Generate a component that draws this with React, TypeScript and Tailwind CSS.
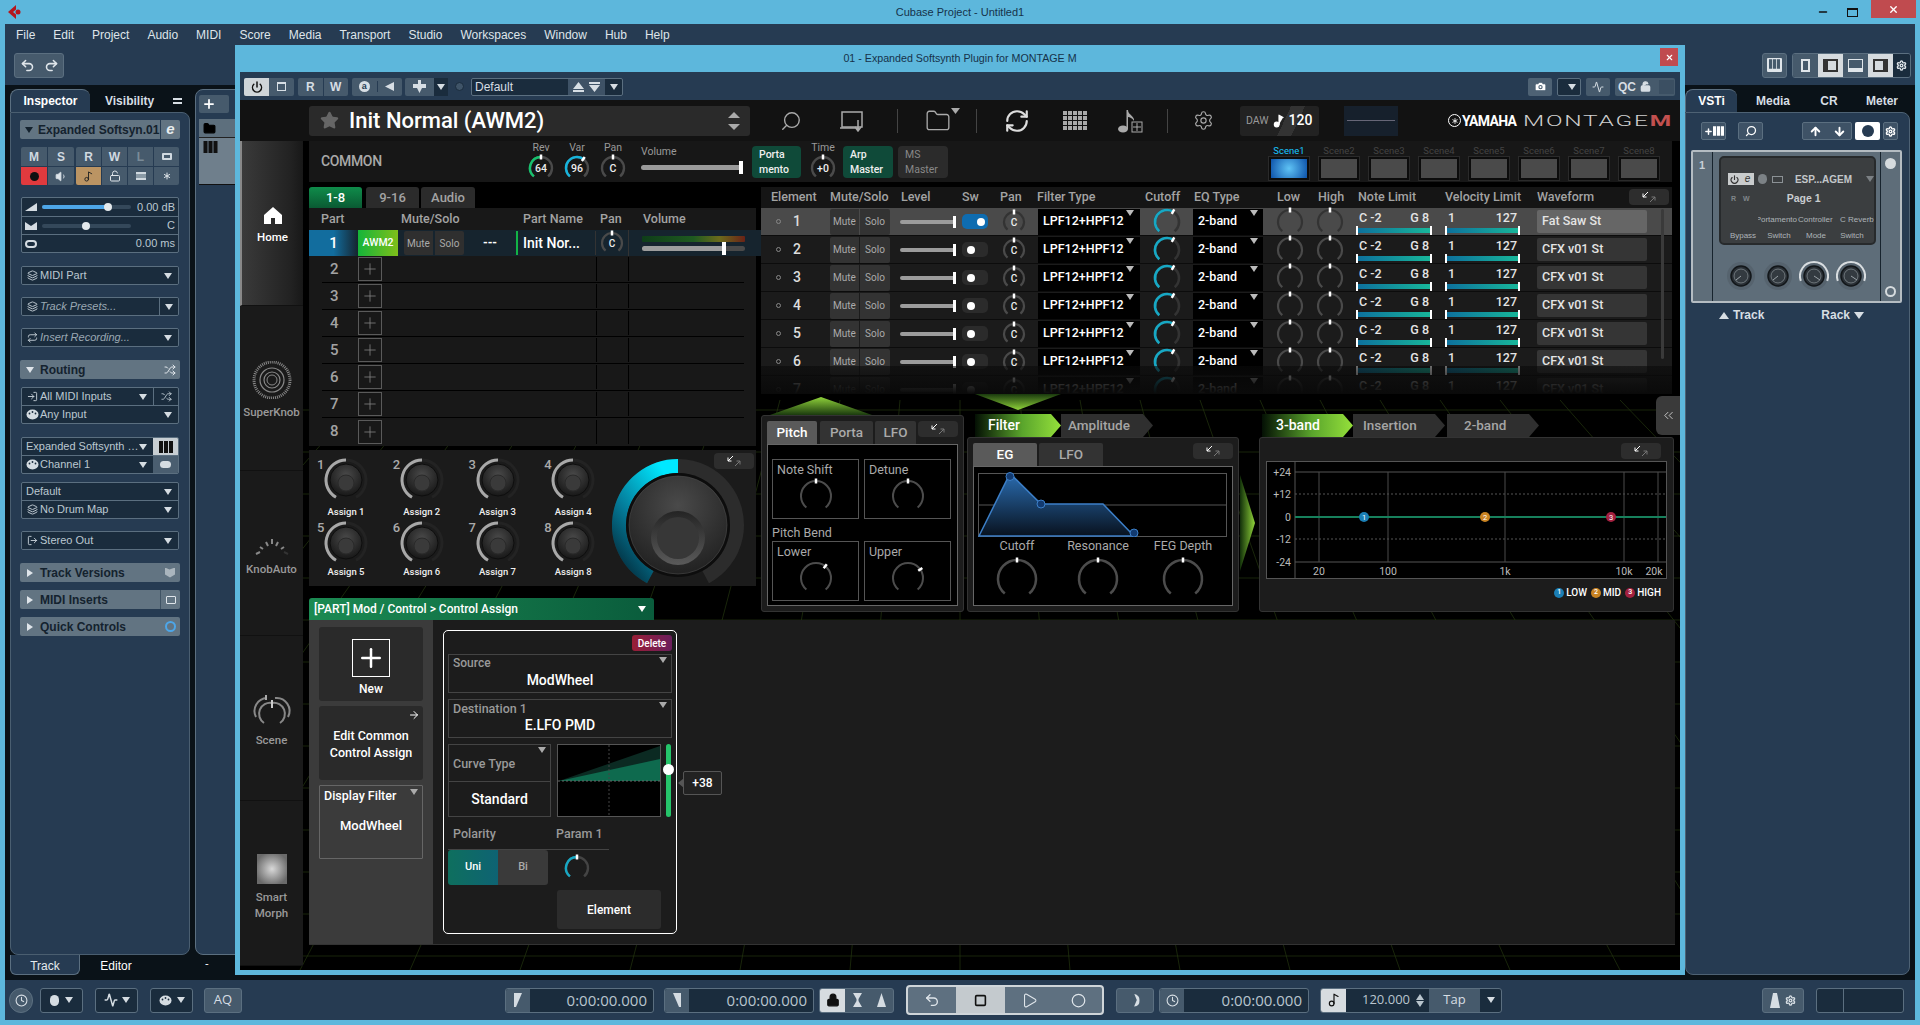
import React from "react";
import {
  Undo2, Redo2, Plus, Search, Settings, RefreshCw, Star, Lock, LockOpen, Square, Play, Circle, Power, ChevronsLeft, ArrowRight, ArrowUp, ArrowDown, Clock, Shuffle, LogIn, LogOut, Activity, Camera, Folder, Music2, Layers, Repeat, X, Minus, Asterisk, Volume1,
} from "lucide-react";

const pol = (c: number, r: number, d: number) => {
  const a = ((d - 90) * Math.PI) / 180;
  return [c + r * Math.cos(a), c + r * Math.sin(a)];
};
const arc = (c: number, r: number, a0: number, a1: number) => {
  const [x0, y0] = pol(c, r, a0);
  const [x1, y1] = pol(c, r, a1);
  return `M${x0} ${y0}A${r} ${r} 0 ${a1 - a0 > 180 ? 1 : 0} 1 ${x1} ${y1}`;
};

function Knob({ s = 26, r = 10, w = 2.5, val = 0, color, label, fs = 10, track = "#4a4a4a", tick = true }: { s?: number; r?: number; w?: number; val?: number; color?: string; label?: string; fs?: number; track?: string; tick?: boolean }) {
  const c = s / 2;
  const [x0, y0] = pol(c, r - 2.5, val);
  const [x1, y1] = pol(c, r + 2.5, val);
  return (
    <svg width={s} height={s} className="shrink-0">
      <path d={arc(c, r, -140, 140)} fill="none" stroke={track} strokeWidth={w} />
      {color && <path d={arc(c, r, -140, val)} fill="none" stroke={color} strokeWidth={w} />}
      {tick && <line x1={x0} y1={y0} x2={x1} y2={y1} stroke="#fff" strokeWidth={2.5} />}
      {label && <text x={c} y={c + fs * 0.4} textAnchor="middle" fontSize={fs} fontWeight={500} fill="#eee" fontFamily="Roboto">{label}</text>}
    </svg>
  );
}

function Expand() {
  return (
    <div className="w-10 h-4 bg-[#2d2d2d] rounded flex items-center justify-center">
      <svg width="16" height="14" viewBox="0 0 16 14" fill="none">
        <path d="M7 2L2 7M2 3.5V7H5.5" stroke="#fff" strokeWidth="1" />
        <path d="M9 12L14 7M14 10.5V7H10.5" stroke="#777" strokeWidth="1" />
      </svg>
    </div>
  );
}

const Caret = ({ c = "#d5dce2" }: { c?: string }) => (
  <svg width="8" height="6" className="shrink-0"><path d="M0 0H8L4 6Z" fill={c} /></svg>
);

function Field({ icon, children, italic, box, right }: { icon?: React.ReactNode; children: React.ReactNode; italic?: boolean; box?: boolean; right?: React.ReactNode }) {
  return (
    <div className="h-[17px] flex items-center text-[11px] text-[#bcc8d1] bg-[#1a2c3d] pl-[3px]">
      {icon && <span className="w-[14px] flex justify-center shrink-0 text-[#c8d2da]">{icon}</span>}
      <span className={`flex-1 truncate pl-[1px] ${italic ? "italic text-[#9aa8b3]" : ""}`}>{children}</span>
      {!box && <span className="mr-[6px]"><Caret /></span>}
      {right}
    </div>
  );
}

const Box = ({ children, className = "" }: { children: React.ReactNode; className?: string }) => (
  <div className={`mx-[10px] border border-[#5b6f80] rounded-[2px] flex flex-col gap-px bg-[#5b6f80] overflow-hidden ${className}`}>{children}</div>
);

function Section({ label, open, right, mt }: { label: string; open?: boolean; right?: React.ReactNode; mt: string }) {
  return (
    <div className={`mx-[9px] h-[19px] bg-[#627482] rounded-[2px] flex items-center text-[12px] font-bold text-[#1c2b38] ${mt}`}>
      <span className="w-[19px] flex justify-center">
        <svg width="8" height="8"><path d={open ? "M0 1H8L4 7Z" : "M1 0V8L7 4Z"} fill="#dfe5ea" /></svg>
      </span>
      <span className="flex-1 pl-[1px] text-[#14222e]">{label}</span>
      {right}
    </div>
  );
}

const MidiPort = () => (
  <svg width="13" height="11" viewBox="0 0 13 11"><ellipse cx="6.5" cy="5.5" rx="6" ry="5" fill="#d5dce2" /><circle cx="3.5" cy="4.5" r=".9" fill="#1a2c3d" /><circle cx="6.5" cy="3" r=".9" fill="#1a2c3d" /><circle cx="9.5" cy="4.5" r=".9" fill="#1a2c3d" /></svg>
);
const Keys = ({ c = "#111", w = 14 }: { c?: string; w?: number }) => (
  <svg width={w} height="12" viewBox="0 0 14 12"><path d="M0 0H4V12H0ZM5 0H9V12H5ZM10 0H14V12H10Z" fill={c} /></svg>
);

function Inspector() {
  return (
    <div className="w-[180px] ml-[5px] flex flex-col font-['Liberation_Sans',sans-serif]">
      <div className="h-[23px] flex text-[12px] font-bold shrink-0">
        <div className="w-[80px] bg-[#263b52] rounded-t-[8px] border-t border-l border-[#5b6f80] flex items-center justify-center text-white">Inspector</div>
        <div className="flex-1 flex items-center text-[#d7dee4] pl-[15px]">Visibility<span className="ml-auto mr-[8px] w-[9px] h-[6px] border-y-2 border-[#d7dee4]" /></div>
      </div>
      <div className="flex-1 bg-[#263b52] rounded-tr-[8px] rounded-bl-[8px] rounded-br-[8px] border border-[#4a5e70] pt-[7px] min-h-0">
        <div className="mx-[9px] flex gap-px h-[19px]">
          <div className="w-[140px] bg-[#627482] flex items-center rounded-l-[2px] text-[12px] font-bold text-[#14222e] whitespace-nowrap">
            <span className="w-[18px] flex justify-center"><svg width="8" height="8"><path d="M0 1H8L4 7Z" fill="#14222e" /></svg></span>Expanded Softsyn.01
          </div>
          <div className="flex-1 bg-[#627482] rounded-r-[2px] flex items-center justify-center text-[#e8edf0] italic font-bold text-[15px] leading-none pb-[3px]">e</div>
        </div>
        <div className="mx-[10px] mt-[8px] flex justify-between">
          <div className="w-[53px] grid grid-cols-2 gap-px rounded-[2px] overflow-hidden text-[12px] font-bold text-[#d0d9e0]">
            <div className="h-[19px] bg-[#465a6c] flex items-center justify-center">M</div>
            <div className="h-[19px] bg-[#465a6c] flex items-center justify-center">S</div>
            <div className="h-[18px] bg-[#e03a3e] flex items-center justify-center"><span className="w-[9px] h-[9px] rounded-full bg-[#111]" /></div>
            <div className="h-[18px] bg-[#465a6c] flex items-center justify-center"><Volume1 size={13} fill="#dfe5ea" strokeWidth={1.5} /></div>
          </div>
          <div className="w-[103px] grid grid-cols-4 gap-px rounded-[2px] overflow-hidden text-[12px] font-bold text-[#d0d9e0]">
            <div className="h-[19px] bg-[#465a6c] flex items-center justify-center">R</div>
            <div className="h-[19px] bg-[#465a6c] flex items-center justify-center">W</div>
            <div className="h-[19px] bg-[#465a6c] flex items-center justify-center text-[#7a8b98]">L</div>
            <div className="h-[19px] bg-[#465a6c] flex items-center justify-center"><span className="w-[10px] h-[7px] border-2 border-[#d0d9e0] rounded-[1px]" /></div>
            <div className="h-[18px] bg-[#bb9463] flex items-center justify-center"><Music2 size={11} color="#222" /></div>
            <div className="h-[18px] bg-[#465a6c] flex items-center justify-center"><LockOpen size={12} color="#dfe5ea" /></div>
            <div className="h-[18px] bg-[#465a6c] flex items-center justify-center"><span className="w-[10px] h-[8px] border-y-2 border-[#d0d9e0] bg-[#8a9aa6]" /></div>
            <div className="h-[18px] bg-[#465a6c] flex items-center justify-center"><Asterisk size={12} color="#dfe5ea" /></div>
          </div>
        </div>
        <Box className="mt-[12px]">
          <div className="h-[18px] flex items-center bg-[#1a2c3d] text-[11px] text-[#bcc8d1]">
            <svg width="14" height="8" className="ml-[3px]"><path d="M0 8L12 0V8Z" fill="#d5dce2" /></svg>
            <div className="ml-[3px] w-[89px] h-[4px] bg-[#34485a] rounded relative"><div className="w-[65px] h-full bg-[#4da6e8] rounded" /><span className="absolute left-[62px] -top-[2px] w-[8px] h-[8px] rounded-full bg-[#e4e9ec]" /></div>
            <span className="ml-auto mr-[3px]">0.00 dB</span>
          </div>
          <div className="h-[17px] flex items-center bg-[#1a2c3d] text-[11px] text-[#bcc8d1]">
            <svg width="14" height="8" className="ml-[3px]"><path d="M0 0L6 4L12 0V8H0Z" fill="#d5dce2" /></svg>
            <div className="ml-[3px] w-[89px] h-[4px] bg-[#34485a] rounded relative"><span className="absolute left-[40px] -top-[2px] w-[8px] h-[8px] rounded-full bg-[#e4e9ec]" /></div>
            <span className="ml-auto mr-[3px]">C</span>
          </div>
          <div className="h-[17px] flex items-center bg-[#1a2c3d] text-[11px] text-[#bcc8d1]">
            <span className="ml-[3px] w-[12px] h-[8px] rounded-full border-2 border-[#d5dce2]" />
            <span className="ml-auto mr-[3px]">0.00 ms</span>
          </div>
        </Box>
        <Box className="mt-[13px]"><Field icon={<Layers size={11} />}>MIDI Part</Field></Box>
        <Box className="mt-[12px]">
          <Field italic box icon={<Layers size={11} />} right={<span className="w-[19px] h-[17px] border-l border-[#5b6f80] flex items-center justify-center"><Caret /></span>}>Track Presets...</Field>
        </Box>
        <Box className="mt-[12px]"><Field italic icon={<Repeat size={11} />}>Insert Recording...</Field></Box>
        <Section label="Routing" open mt="mt-[13px]" right={<Shuffle size={12} className="mr-[4px] text-[#dfe5ea]" />} />
        <Box className="mt-[8px]">
          <Field icon={<LogIn size={11} />} right={<span className="w-[25px] h-[17px] border-l border-[#5b6f80] flex items-center justify-center"><Shuffle size={11} /></span>}>All MIDI Inputs</Field>
          <Field icon={<MidiPort />}>Any Input</Field>
        </Box>
        <Box className="mt-[13px]">
          <Field right={<span className="w-[25px] h-[17px] bg-[#c7ced3] flex items-center justify-center"><Keys /></span>}>Expanded Softsynth Pl.</Field>
          <Field icon={<MidiPort />} right={<span className="w-[25px] h-[17px] bg-[#4a5e70] flex items-center justify-center"><span className="w-[11px] h-[7px] rounded-full bg-[#d5dce2]" /></span>}>Channel 1</Field>
        </Box>
        <Box className="mt-[8px]">
          <Field>Default</Field>
          <Field icon={<Layers size={11} />}>No Drum Map</Field>
        </Box>
        <Box className="mt-[12px]"><Field icon={<LogOut size={11} />}>Stereo Out</Field></Box>
        <Section label="Track Versions" mt="mt-[13px]" right={<span className="mr-[5px] w-[10px] h-[10px] bg-[#aab5bd] [clip-path:polygon(0_0,45%_20%,100%_0,100%_70%,50%_100%,0_70%)]" />} />
        <Section label="MIDI Inserts" mt="mt-[8px]" right={<span className="w-[20px] h-[19px] border-l border-[#3f5364] flex items-center justify-center"><span className="w-[10px] h-[8px] border border-[#dfe5ea] rounded-[1px]" /></span>} />
        <Section label="Quick Controls" mt="mt-[8px]" right={<span className="mr-[4px] w-[11px] h-[11px] rounded-full border-2 border-[#4da6e8]" />} />
      </div>
      <div className="h-[20px] flex text-[12px] shrink-0 mb-[5px]">
        <div className="w-[70px] bg-[#263b52] rounded-b-[6px] border-b border-x border-[#5b6f80] flex items-center justify-center text-[#e4eaee] pt-[2px]">Track</div>
        <div className="flex-1 flex items-center justify-center pr-[38px] text-white pt-[2px]">Editor</div>
      </div>
    </div>
  );
}

function TrackList() {
  return (
    <div className="w-[100px] ml-[5px] flex flex-col">
      <div className="flex-1 bg-[#263b52] border border-[#5b6f80] rounded-t-[8px] rounded-bl-[8px] pt-[5px] pl-[3px]">
        <div className="h-[18px] w-[30px] bg-[#465a6c] rounded-[2px] flex items-center pl-[3px]"><Plus size={14} strokeWidth={3} color="#fff" /></div>
        <div className="mt-[6px] h-[19px] bg-[#5d6f7d] border-b border-[#222] flex items-center pl-[4px]"><Folder size={13} fill="#000" color="#000" /></div>
        <div className="h-[47px] bg-[#6f7f8c] border-b border-[#111] pl-[4px] pt-[3px]"><Keys w={15} /></div>
      </div>
      <div className="h-[25px] flex items-start pl-[10px]"><span className="text-[11px] text-white">-</span></div>
    </div>
  );
}

function Rack() {
  return (
    <div className="w-[225px] ml-auto mr-[5px] flex flex-col font-['Liberation_Sans',sans-serif]">
      <div className="h-[23px] flex items-center text-[12px] font-bold text-[#d7dee4] shrink-0">
        <div className="w-[52px] h-full bg-[#263b52] rounded-t-[8px] border-t border-l border-[#5b6f80] flex items-center justify-center text-white">VSTi</div>
        <span className="w-[62px] text-center ml-[5px]">Media</span>
        <span className="w-[40px] text-center ml-[5px]">CR</span>
        <span className="ml-[17px]">Meter</span>
      </div>
      <div className="flex-1 bg-[#263b52] rounded-tr-[8px] rounded-b-[8px] border border-[#4e6274] pt-[9px] mb-[5px] relative">
        <div className="flex items-center h-[18px] pl-[15px]">
          <div className="w-[25px] h-[18px] bg-[#3e5266] border border-[#5b6f80] rounded-[2px] flex items-center justify-center text-white"><Plus size={9} strokeWidth={4} /><Keys c="#fff" w={11} /></div>
          <div className="w-[25px] h-[18px] ml-[12px] border border-[#5b6f80] bg-[#3e5266] rounded-[2px] flex items-center justify-center"><Search size={12} color="#fff" strokeWidth={2.5} className="-scale-x-100" /></div>
          <div className="w-[50px] h-[18px] ml-[39px] border border-[#5b6f80] bg-[#3e5266] rounded-[2px] flex items-center justify-around text-white"><ArrowUp size={13} strokeWidth={3.5} /><ArrowDown size={13} strokeWidth={3.5} /></div>
          <div className="w-[25px] h-[18px] ml-[3px] bg-white rounded-[2px] flex items-center justify-center"><span className="w-[12px] h-[12px] rounded-full bg-[#263b52]" /></div>
          <div className="w-[15px] h-[18px] ml-[3px] border border-[#5b6f80] bg-[#3e5266] rounded-[2px] flex items-center justify-center"><Settings size={11} color="#fff" strokeWidth={3} /></div>
        </div>
        <div className="mt-[10px] ml-[5px] w-[211px] h-[153px] bg-[#5e6d79] border-2 border-[#b4bcc2] flex rounded-[2px]">
          <div className="w-[20px] border-r border-[#17232d] text-[11px] font-bold text-[#c8d0d6] pl-[6px] pt-[5px]">1</div>
          <div className="flex-1 min-w-0">
            <div className="mt-[4px] ml-[6px] w-[157px] h-[89px] bg-[#3b3e40] border-2 border-[#272a2c] rounded-[5px] pt-[15px] text-[#aeb4b8] relative">
              <div className="flex items-center pl-[7px] h-[12px]">
                <span className="w-[14px] h-[12px] bg-[#c9cccd] flex items-center justify-center"><Power size={9} color="#333" strokeWidth={3} /></span>
                <span className="w-[13px] h-[12px] bg-[#c9cccd] text-[#333] text-[10px] italic leading-[11px] text-center">e</span>
                <span className="ml-[4px] w-[10px] h-[10px] rounded-full bg-[#7c8286]" />
                <span className="ml-[5px] w-[11px] h-[7px] border border-[#8b9195]" />
                <span className="ml-[12px] text-[10px] font-bold text-[#c3c7ca]">ESP...AGEM</span>
                <span className="ml-[14px]"><Caret c="#7b8084" /></span>
              </div>
              <div className="flex items-center pl-[10px] mt-[8px] h-[12px]">
                <span className="text-[7px] font-bold text-[#80868a]">R</span>
                <span className="text-[7px] font-bold text-[#80868a] ml-[7px]">W</span>
                <span className="text-[10.5px] font-bold text-[#c8cccf] ml-[37px]">Page 1</span>
              </div>
              <div className="flex pl-[37px] mt-[9px] text-[8px] whitespace-nowrap"><span className="w-[39px] overflow-hidden text-right [direction:rtl]">Portamento</span><span className="ml-[1px] w-[38px]">Controller</span><span className="ml-[4px]">C Reverb</span></div>
              <div className="flex mt-[4px] text-[8px] text-center"><span className="w-[30px] ml-[7px]">Bypass</span><span className="w-[30px] ml-[6px]">Switch</span><span className="w-[30px] ml-[7px]">Mode</span><span className="w-[30px] ml-[6px]">Switch</span></div>
            </div>
            <div className="mt-[16px] ml-[13px] flex">
              {[0, 1, 2, 3].map((i) => (
                <svg key={i} width="30" height="30" className="mr-[6.5px]">
                  <circle cx="15" cy="15" r="14" fill="#56636e" />
                  {i > 1 && <path d={arc(15, 14, -110, 110)} fill="none" stroke="#d8dde0" strokeWidth="2" />}
                  <circle cx="15" cy="15" r="10" fill="#2a3036" stroke="#121619" strokeWidth="1.5" />
                  <circle cx="15" cy="15" r="7" fill="#333a40" stroke="#8b9398" strokeWidth=".7" />
                  <line x1="15" y1="15" x2={i > 1 ? 21 : 10} y2="19" stroke="#9aa2a7" strokeWidth="1" />
                </svg>
              ))}
            </div>
          </div>
          <div className="w-[20px] border-l border-[#17232d] flex flex-col items-center pt-[6px] justify-between pb-[4px]">
            <span className="w-[11px] h-[11px] rounded-full bg-[#d6dbde]" />
            <span className="w-[11px] h-[11px] rounded-full border-2 border-[#d6dbde]" />
          </div>
        </div>
        <div className="flex mt-[4px] h-[16px] text-[12px] font-bold text-[#d7dee4] items-center">
          <span className="ml-[33px] flex items-center gap-[4px]"><svg width="10" height="7"><path d="M0 7H10L5 0Z" fill="#d7dee4" /></svg>Track</span>
          <span className="ml-[57px] flex items-center gap-[4px]">Rack<svg width="10" height="7"><path d="M0 0H10L5 7Z" fill="#d7dee4" /></svg></span>
        </div>
      </div>
    </div>
  );
}

const Tb = ({ children, className = "" }: { children?: React.ReactNode; className?: string }) => (
  <div className={`h-[25px] rounded-[3px] border border-[#5b6f80] flex items-center justify-center text-[#d7dee4] shrink-0 ${className}`}>{children}</div>
);

function Transport() {
  return (
    <div className="h-[40px] flex items-center shrink-0 font-['Open_Sans',sans-serif] text-[#c8d2da]">
      <Tb className="w-[24px] ml-[4px] bg-[#465a6c] rounded-full"><Clock size={13} /></Tb>
      <Tb className="w-[43px] ml-[7px] bg-[#1a2c3d] gap-[6px]"><span className="w-[9px] h-[11px] rounded-full bg-[#d5dce2]" /><Caret /></Tb>
      <Tb className="w-[43px] ml-[12px] bg-[#1a2c3d] gap-[4px]"><Activity size={14} strokeWidth={2.5} /><Caret /></Tb>
      <Tb className="w-[43px] ml-[12px] bg-[#1a2c3d] gap-[5px]"><MidiPort /><Caret /></Tb>
      <Tb className="w-[38px] ml-[11px] bg-[#465a6c] text-[13px]">AQ</Tb>
      <Tb className="w-[149px] ml-[263px] bg-[#1a2c3d] justify-start overflow-hidden">
        <span className="w-[24px] h-full bg-[#465a6c] flex items-center justify-center"><svg width="8" height="14"><path d="M0 0H8L2 14H0Z" fill="#d5dce2" /></svg></span>
        <span className="flex-1 text-right pr-[6px] text-[15px] text-[#b9c5ce]">0:00:00.000</span>
      </Tb>
      <Tb className="w-[150px] ml-[10px] bg-[#1a2c3d] justify-start overflow-hidden">
        <span className="w-[24px] h-full bg-[#465a6c] flex items-center justify-center"><svg width="8" height="14"><path d="M0 0H8V14H6Z" fill="#d5dce2" /></svg></span>
        <span className="flex-1 text-right pr-[6px] text-[15px] text-[#b9c5ce]">0:00:00.000</span>
      </Tb>
      <Tb className="w-[75px] ml-[5px] bg-[#465a6c] justify-start overflow-hidden">
        <span className="w-[25px] h-full bg-[#d7dce0] flex items-center justify-center"><Lock size={14} color="#111" fill="#111" /></span>
        <span className="flex-1 flex justify-center"><svg width="9" height="14"><path d="M0 0H9L5.5 6V8L9 14H0L3.5 8V6Z" fill="#d5dce2" /></svg></span>
        <span className="flex-1 flex justify-center"><svg width="9" height="14"><path d="M4.5 0L9 14H0Z" fill="#d5dce2" /></svg></span>
      </Tb>
      <div className="w-[198px] h-[30px] ml-[12px] bg-[#5e7080] border-2 border-[#cfd5d9] rounded-[4px] flex items-center overflow-hidden shrink-0 text-[#dfe5ea]">
        <span className="w-[48px] h-full flex items-center justify-center"><Undo2 size={16} /></span>
        <span className="w-[49px] h-full bg-[#c4cace] flex items-center justify-center"><Square size={13} color="#111" strokeWidth={3} /></span>
        <span className="w-[49px] h-full flex items-center justify-center"><Play size={17} strokeWidth={1.5} /></span>
        <span className="w-[48px] h-full flex items-center justify-center"><Circle size={15} strokeWidth={2} /></span>
      </div>
      <Tb className="w-[38px] ml-[12px] bg-[#465a6c]"><span className="w-[9px] h-[13px] bg-[#d7dee4] rounded-r-full [clip-path:polygon(40%_0,100%_0,100%_100%,40%_100%,70%_50%)]" /></Tb>
      <Tb className="w-[150px] ml-[5px] bg-[#1a2c3d] justify-start overflow-hidden">
        <span className="w-[24px] h-full bg-[#465a6c] flex items-center justify-center"><Clock size={13} /></span>
        <span className="flex-1 text-right pr-[6px] text-[15px] text-[#b9c5ce]">0:00:00.000</span>
      </Tb>
      <Tb className="w-[182px] ml-[11px] bg-[#1a2c3d] justify-start overflow-hidden">
        <span className="w-[25px] h-full bg-[#d7dce0] flex items-center justify-center"><Music2 size={14} color="#111" /></span>
        <span className="w-[64px] text-right text-[13px] text-[#b9c5ce]">120.000</span>
        <span className="w-[19px] flex flex-col items-center gap-[1px]"><svg width="8" height="6"><path d="M0 6H8L4 0Z" fill="#b9c5ce" /></svg><Caret c="#b9c5ce" /></span>
        <span className="w-[51px] h-full bg-[#465a6c] flex items-center justify-center text-[13px]">Tap</span>
        <span className="flex-1 flex justify-center"><Caret /></span>
      </Tb>
      <Tb className="w-[42px] ml-[260px] bg-[#465a6c] gap-[5px]"><svg width="10" height="15"><path d="M3 0H7L10 15H0Z" fill="#d7dee4" /></svg><Settings size={11} strokeWidth={3} /></Tb>
      <Tb className="w-[88px] ml-[12px] bg-[#1a2c3d] justify-start"><span className="ml-[26px] w-px h-full bg-[#5b6f80]" /></Tb>
    </div>
  );
}

function GridBg() {
  const lines = [];
  for (let i = 0; i < 14; i++) lines.push(<line key={"h" + i} x1="0" x2="1440" y1={310 + i * 42} y2={310 + i * 42} />);
  for (let i = -20; i < 40; i++) lines.push(<line key={"v" + i} x1={720 + i * 60} x2={720 + i * 110} y1="300" y2="870" />);
  return <svg className="absolute inset-0 w-full h-full" stroke="#3c5a1a" strokeWidth=".7" opacity=".6">{lines}</svg>;
}

function Chev({ children, active, w, pl }: { children: React.ReactNode; active?: boolean; w: string; pl: string }) {
  return (
    <div className={`h-[23px] flex items-center font-medium [clip-path:polygon(0_0,calc(100%-10px)_0,100%_50%,calc(100%-10px)_100%,0_100%)] ${w} ${pl} ${active ? "bg-[linear-gradient(90deg,#041004,#5aa52c_55%,#95e03b)] text-white font-bold text-[14px]" : "bg-[#2f2f2f] text-[#a5a5a5] text-[13.5px]"}`}>{children}</div>
  );
}

function SubBox({ label, val }: { label: string; val: number }) {
  return (
    <div className="w-[87px] h-[60px] border border-[#555] bg-black">
      <div className="text-[12.5px] text-[#aaa] pl-[4px] pt-[2px] leading-[15px] h-[17px]">{label}</div>
      <div className="flex justify-center"><Knob s={38} r={15} w={2} val={val} track="#4c4c4c" /></div>
    </div>
  );
}

function AssignKnob({ n, label }: { n: number; label: string }) {
  return (
    <div className="w-[77px] h-[63px] pl-[8px] pt-[2px] relative">
      <div className="flex items-start">
        <span className="text-[13px] font-medium text-[#aaa] leading-[16px] w-[6px]">{n}</span>
        <svg width="46" height="46" className="shrink-0">
          <defs>
            <radialGradient id={"ak" + n} cx="50%" cy="35%" r="70%"><stop offset="0" stopColor="#4a4a4a" /><stop offset="1" stopColor="#141414" /></radialGradient>
          </defs>
          <path d={arc(23, 20, -150, 150)} fill="none" stroke="#232323" strokeWidth="3" />
          <path d={arc(23, 20, -150, 0)} fill="none" stroke="#a8a8a8" strokeWidth="3" />
          <circle cx="23" cy="23" r="16" fill={`url(#ak${n})`} stroke="#0e0e0e" strokeWidth="1" />
          <ellipse cx="23" cy="26" rx="8" ry="8" fill="#3a3a3a" stroke="#2a2a2a" />
        </svg>
      </div>
      <div className={`w-[52px] ml-[3px] text-center text-[9.5px] font-medium text-[#eee] leading-[12px] ${n <= 4 ? "mt-[3px]" : "mt-0"}`}>{label}</div>
    </div>
  );
}

function Element({ n, sel }: { n: number; sel?: boolean }) {
  const wave = sel ? "Fat Saw St" : "CFX v01 St";
  const track = sel ? "#333" : "#4a4a4a";
  const bar = (
    <div className="h-[7px] mt-[1px] relative">
      <div className="absolute inset-x-0 top-[1px] h-[5px] bg-[linear-gradient(90deg,#0d6f9d,#18b89a)]" />
      <span className="absolute left-0 -top-[1px] h-[9px] w-[2px] bg-white" />
      <span className="absolute right-0 -top-[1px] h-[9px] w-[2px] bg-white" />
    </div>
  );
  return (
    <div className={`h-[28px] flex items-center shrink-0 border-b border-[#0c0c0c] ${sel ? "bg-[#4a4a4a]" : "bg-[#1b1b1b]"}`}>
      <div className="w-[69px] flex items-center pl-[15px] text-[#ddd] text-[14px] font-medium">
        <span className="w-[5px] h-[5px] rounded-full border border-[#888]" /><span className="ml-[12px]">{n}</span>
      </div>
      <div className="w-[60px] h-[26px] flex text-[10px] text-[#aaa] gap-px">
        <span className="w-[29px] bg-[#333] flex items-center justify-center rounded-l-[2px]">Mute</span>
        <span className="w-[30px] bg-[#333] flex items-center justify-center rounded-r-[2px]">Solo</span>
      </div>
      <div className="w-[72px] pl-[10px]">
        <div className="w-[56px] h-[4px] bg-[#9c9c9c] rounded-l relative"><span className="absolute right-0 -top-[4px] w-[3px] h-[12px] bg-white" /></div>
      </div>
      <div className="w-[30px]">
        <div className={`w-[26px] h-[15px] rounded-[5px] flex items-center pl-[5px] ${sel ? "bg-[#0e6cb0] justify-end pr-[3px] pl-0" : "bg-[#2b2b2b]"}`}><span className="w-[8px] h-[8px] rounded-full bg-white" /></div>
      </div>
      <div className="w-[44px] flex justify-center"><Knob s={26} r={10} w={2.2} label="C" fs={10} track={track} /></div>
      <div className="w-[106px] h-[28px] pl-[2px] relative">
        <div className="w-[102px] h-[26px] mt-[1px] bg-black text-white text-[12.5px] font-medium flex items-center pl-[5px]">LPF12+HPF12</div>
        <span className="absolute right-[8px] top-[2px]"><Caret c="#bbb" /></span>
      </div>
      <div className="w-[49px] flex justify-center"><Knob s={30} r={12} w={2.6} val={30} color="#17a8c4" track="#333" /></div>
      <div className="w-[77px] h-[28px] pl-[2px] relative">
        <div className="w-[70px] h-[26px] mt-[1px] bg-black text-white text-[12.5px] font-medium flex items-center pl-[5px]">2-band</div>
        <span className="absolute right-[10px] top-[2px]"><Caret c="#bbb" /></span>
      </div>
      <div className="w-[44px] flex justify-center"><Knob s={30} r={12} w={2.2} track={track} /></div>
      <div className="w-[35px] flex justify-center"><Knob s={30} r={12} w={2.2} track={track} /></div>
      <div className="w-[93px] pl-[9px]">
        <div className="w-[76px]">
          <div className="flex justify-between px-[3px] text-[12.5px] font-medium text-[#e4e4e4] leading-[16px]"><span>C -2</span><span>G 8</span></div>
          {bar}
        </div>
      </div>
      <div className="w-[88px] pl-[5px]">
        <div className="w-[75px]">
          <div className="flex justify-between px-[3px] text-[12.5px] font-medium text-[#e4e4e4] leading-[16px]"><span>1</span><span>127</span></div>
          {bar}
        </div>
      </div>
      <div className="pl-[9px]">
        <div className={`w-[110px] h-[23px] rounded-[2px] flex items-center pl-[5px] text-[12.5px] font-medium text-[#e4e4e4] ${sel ? "bg-[#666]" : "bg-[#353535]"}`}>{wave}</div>
      </div>
    </div>
  );
}

function EqGraph() {
  const xs = [52, 121, 238, 357, 391];
  const ys = [10, 32, 55, 77, 100];
  return (
    <svg width="401" height="118" className="border border-[#555] bg-black block">
      <line x1="28" y1="0" x2="28" y2="118" stroke="#555" />
      <line x1="28" y1="10" x2="401" y2="10" stroke="#555" />
      <line x1="28" y1="100" x2="401" y2="100" stroke="#555" />
      <line x1="28" y1="32" x2="401" y2="32" stroke="#555" strokeDasharray="2 2" />
      <line x1="28" y1="77" x2="401" y2="77" stroke="#555" strokeDasharray="2 2" />
      {xs.map((x) => <line key={x} x1={x} y1="10" x2={x} y2="100" stroke="#4a4a4a" />)}
      {["+24", "+12", "0", "-12", "-24"].map((t, i) => <text key={t} x="24" y={ys[i] + 4} textAnchor="end" fontSize="10.5" fill="#bbb" fontFamily="Roboto">{t}</text>)}
      {[["20", 52], ["100", 121], ["1k", 238], ["10k", 357], ["20k", 387]].map(([t, x]) => <text key={t as string} x={x as number} y="113" textAnchor="middle" fontSize="10.5" fill="#bbb" fontFamily="Roboto">{t}</text>)}
      <line x1="28" y1="55" x2="401" y2="55" stroke="#17805c" strokeWidth="2" />
      {[[97, "#1b7fb5", "1"], [218, "#c98322", "2"], [344, "#a3203f", "3"]].map(([x, c, t]) => (
        <g key={t as string}>
          <circle cx={x as number} cy="55" r="5" fill={c as string} />
          <text x={x as number} y="58" textAnchor="middle" fontSize="7.5" fill="#fff" fontFamily="Roboto">{t}</text>
        </g>
      ))}
    </svg>
  );
}

function Main() {
  const plus = (
    <div className="w-[24px] h-[24px] border border-[#5a5a5a] flex items-center justify-center"><Plus size={18} strokeWidth={1} color="#888" /></div>
  );
  return (
    <div className="w-[1371px] ml-[6px] relative flex flex-col">
      {/* Common */}
      <div className="h-[41px] w-[1363px] bg-[#171717] flex items-center shrink-0 relative">
        <span className="ml-[12px] w-[202px] text-[14px] font-medium text-[#a9a9a9] tracking-tight">COMMON</span>
        <div className="w-[36px] flex flex-col items-center text-[10.5px] text-[#999] leading-[13px]"><span>Rev</span><Knob s={28} r={11} w={2.4} val={0} color="#16c26e" label="64" fs={10.5} /></div>
        <div className="w-[36px] flex flex-col items-center text-[10.5px] text-[#999] leading-[13px]"><span>Var</span><Knob s={28} r={11} w={2.4} val={35} color="#16b4dc" label="96" fs={10.5} /></div>
        <div className="w-[36px] flex flex-col items-center text-[10.5px] text-[#999] leading-[13px]"><span>Pan</span><Knob s={28} r={11} w={2.4} label="C" fs={10.5} /></div>
        <div className="w-[102px] ml-[10px] text-[10.5px] text-[#999] -mt-[9px]">
          <div className="leading-[13px] mb-[7px]">Volume</div>
          <div className="h-[5px] bg-[#9a9a9a] rounded-l relative"><span className="absolute right-0 -top-[4px] w-[4px] h-[13px] bg-white" /></div>
        </div>
        <div className="w-[49px] h-[32px] ml-[9px] bg-[#0f4a39] rounded-[4px] text-[10.5px] font-medium text-[#eee] leading-[15px] pl-[7px] pt-[1px]">Porta<br />mento</div>
        <div className="w-[40px] ml-[2px] flex flex-col items-center text-[10.5px] text-[#999] leading-[13px]"><span>Time</span><Knob s={28} r={11} w={2.4} label="+0" fs={10.5} /></div>
        <div className="w-[50px] h-[32px] bg-[#0f4a39] rounded-[4px] text-[10.5px] font-medium text-[#eee] leading-[15px] pl-[7px] pt-[1px]">Arp<br />Master</div>
        <div className="w-[50px] h-[32px] ml-[5px] bg-[#2b2b2b] rounded-[4px] text-[10.5px] text-[#888] leading-[15px] pl-[7px] pt-[1px]">MS<br />Master</div>
        <div className="ml-[321px] flex gap-[10px]">
          {[1, 2, 3, 4, 5, 6, 7, 8].map((n) => (
            <div key={n} className="w-[40px] flex flex-col items-center">
              <span className={`text-[9.5px] leading-[13px] ${n === 1 ? "text-[#19c6ff]" : "text-[#444]"}`}>Scene{n}</span>
              <div className={`w-[40px] h-[23px] border-2 border-[#0c0c0c] outline outline-1 outline-[#2a2a2a] ${n === 1 ? "bg-[radial-gradient(circle,#5fc3f5,#0d52aa)]" : "bg-[#4a4a4a]"}`} />
            </div>
          ))}
        </div>
      </div>

      <div className="h-[433px] mt-[5px] flex shrink-0">
        {/* Left */}
        <div className="w-[447px] flex flex-col shrink-0">
          <div className="h-[21px] flex text-[13px] font-medium shrink-0">
            <div className="w-[53px] rounded-t-[3px] bg-[linear-gradient(180deg,#0f8c4a,#0a5a33)] text-white flex items-center justify-center">1-8</div>
            <div className="w-[53px] ml-[4px] rounded-t-[3px] bg-[#2b2b2b] text-[#a3a3a3] flex items-center justify-center">9-16</div>
            <div className="w-[54px] ml-[2px] rounded-t-[3px] bg-[#2b2b2b] text-[#a3a3a3] flex items-center justify-center">Audio</div>
          </div>
          <div className="h-[238px] bg-[#181818] shrink-0">
            <div className="h-[22px] flex items-center text-[12.5px] font-medium text-[#a3a3a3]">
              <span className="ml-[12px] w-[80px]">Part</span><span className="w-[122px]">Mute/Solo</span><span className="w-[77px]">Part Name</span><span className="w-[43px]">Pan</span><span>Volume</span>
            </div>
            <div className="h-[26px] w-[456px] bg-[#16242e] flex items-center">
              <div className="w-[49px] h-full bg-[linear-gradient(90deg,#126d9e,#126d9e_50%,#16242e)] flex items-center justify-center text-[15px] font-medium text-white">1</div>
              <div className="w-[40px] h-full bg-[linear-gradient(90deg,#15b53a,#7fbf1a)] flex items-center justify-center text-[10.5px] font-medium text-white">AWM2</div>
              <div className="ml-[6px] w-[60px] h-[24px] flex text-[10px] text-[#aaa] gap-[2px]">
                <span className="flex-1 bg-[#2f2f2f] rounded-l-[2px] flex items-center justify-center">Mute</span>
                <span className="flex-1 bg-[#2f2f2f] rounded-r-[2px] flex items-center justify-center">Solo</span>
              </div>
              <span className="w-[52px] text-center text-[12px] font-bold text-white">---</span>
              <div className="w-[80px] h-[24px] border-l-2 border-[#12b347] pl-[5px] text-[14px] font-medium text-white leading-[24px] whitespace-nowrap border-r border-r-[#333]">Init Nor...</div>
              <div className="w-[33px] flex justify-center border-r border-[#333]"><Knob s={26} r={10} w={2.2} label="C" fs={10} /></div>
              <div className="ml-[13px] w-[103px] flex flex-col gap-[4px]">
                <div className="h-[6px] bg-[linear-gradient(90deg,#0f3d19,#1f5a20_50%,#6b6b1c_75%,#6a2216)] rounded-[1px]" />
                <div className="h-[5px] bg-[#4a4a4a] rounded relative"><div className="w-[80px] h-full bg-[#9d9d9d] rounded-l" /><span className="absolute left-[80px] -top-[4px] w-[4px] h-[13px] bg-white" /></div>
              </div>
            </div>
            {[2, 3, 4, 5, 6, 7, 8].map((n) => (
              <div key={n} className="h-[27px] ml-[13px] w-[422px] flex items-center border-b border-[#000] last:border-b-0">
                <span className="w-[23px] pl-[8px] text-[15px] font-medium text-[#a3a3a3]">{n}</span>
                <span className="ml-[13px]">{plus}</span>
                <span className="ml-[214px] w-[33px] h-[24px] border-x border-[#000]" />
              </div>
            ))}
          </div>
          <div className="mt-[4px] h-[136px] bg-[#1b1b1b] flex shrink-0 relative">
            <div className="w-[303px] shrink-0 grid grid-cols-4 content-start pt-[5px]">
              {[1, 2, 3, 4, 5, 6, 7, 8].map((n) => <AssignKnob key={n} n={n} label={`Assign ${n}`} />)}
            </div>
            <svg width="136" height="136" className="shrink-0">
              <defs>
                <linearGradient id="cy" x1="0" y1="1" x2="0.7" y2="0"><stop offset="0" stopColor="#032230" /><stop offset=".45" stopColor="#047a98" /><stop offset="1" stopColor="#00e8ff" /></linearGradient>
                <radialGradient id="bk" cx="50%" cy="30%" r="75%"><stop offset="0" stopColor="#4a4a4a" /><stop offset="1" stopColor="#1f1f1f" /></radialGradient>
                <linearGradient id="cap" x1="0" y1="0" x2="0" y2="1"><stop offset="0" stopColor="#242424" /><stop offset="1" stopColor="#5a5a5a" /></linearGradient>
              </defs>
              <g transform="translate(-2 7)">
                <path d={arc(68, 59, -152, 152)} fill="none" stroke="#2c2c2c" strokeWidth="14" />
                <path d={arc(68, 59, -152, 0)} fill="none" stroke="url(#cy)" strokeWidth="14" />
                <circle cx="68" cy="68" r="52" fill="#0d0d0d" />
                <circle cx="68" cy="68" r="49" fill="url(#bk)" stroke="#555" strokeWidth=".5" />
                <circle cx="68" cy="81" r="27" fill="url(#cap)" />
                <circle cx="68" cy="81" r="21" fill="#373737" />
              </g>
            </svg>
            <div className="absolute right-[2px] top-[3px]"><Expand /></div>
          </div>
          <div className="mt-auto w-[345px] h-[22px] rounded-t-[3px] bg-[linear-gradient(90deg,#1b8a52,#0a5c3c)] flex items-center pl-[5px] text-[12px] font-medium text-white shrink-0">
            [PART] Mod / Control &gt; Control Assign<span className="ml-auto mr-[8px]"><Caret c="#fff" /></span>
          </div>
        </div>

        {/* Right */}
        <div className="w-[919px] ml-[5px] flex flex-col shrink-0">
          <div className="h-[207px] w-[911px] bg-[#151515] relative overflow-hidden shrink-0">
            <div className="h-[21px] flex items-center text-[12.5px] font-medium text-[#a3a3a3]">
              <span className="pl-[10px] w-[69px]">Element</span><span className="w-[71px]">Mute/Solo</span><span className="w-[61px]">Level</span><span className="w-[38px]">Sw</span><span className="w-[37px]">Pan</span><span className="w-[108px]">Filter Type</span><span className="w-[49px]">Cutoff</span><span className="w-[83px]">EQ Type</span><span className="w-[41px]">Low</span><span className="w-[40px]">High</span><span className="w-[87px]">Note Limit</span><span className="w-[92px] whitespace-nowrap">Velocity Limit</span><span>Waveform</span>
            </div>
            <div className="absolute right-[3px] top-[2px]"><Expand /></div>
            <Element n={1} sel />
            {[2, 3, 4, 5, 6, 7].map((n) => <Element key={n} n={n} />)}
            <div className="absolute inset-x-0 bottom-0 h-[28px] bg-[linear-gradient(180deg,rgba(10,10,10,.6),#0a0a0a)]" />
            <span className="absolute right-[8px] top-[22px] h-[150px] w-[3px] rounded bg-[#3a3a3a]" />
          </div>

          <div className="flex-1 relative min-h-0">
            <svg width="120" height="22" className="absolute left-[4px] -top-[1px]"><defs><linearGradient id="gt" x1="0" y1="0" x2="0" y2="1"><stop offset="0" stopColor="#8fd23a" /><stop offset="1" stopColor="#1a3a0e" /></linearGradient></defs><path d="M5 22L56 4L107 22Z" fill="url(#gt)" /></svg>
            <svg width="90" height="18" className="absolute left-[212px] top-0"><defs><linearGradient id="gd" x1="0" y1="0" x2="0" y2="1"><stop offset="0" stopColor="#1a3a0e" /><stop offset="1" stopColor="#8fd23a" /></linearGradient></defs><path d="M2 0H88L45 16Z" fill="url(#gd)" /></svg>
            <div className="flex pt-[21px] items-start">
              {/* Pitch panel */}
              <div className="w-[203px] h-[197px] bg-[#1c1c1c] border border-[#333] rounded-[3px] px-[5px] pt-[5px] shrink-0">
                <div className="flex h-[23px] text-[13.5px] font-medium">
                  <div className="w-[50px] bg-[#5a5a5a] rounded-t-[2px] flex items-center justify-center text-white">Pitch</div>
                  <div className="w-[53px] ml-[3px] bg-[#333] rounded-t-[2px] flex items-center justify-center text-[#aaa]">Porta</div>
                  <div className="w-[41px] ml-[2px] bg-[#333] rounded-t-[2px] flex items-center justify-center text-[#aaa]">LFO</div>
                  <div className="ml-[2px]"><Expand /></div>
                </div>
                <div className="w-[191px] h-[162px] border border-[#666] bg-black px-[4px] pt-[14px]">
                  <div className="flex gap-[5px]"><SubBox label="Note Shift" val={0} /><SubBox label="Detune" val={0} /></div>
                  <div className="text-[12.5px] text-[#aaa] leading-[15px] mt-[6px] mb-[1px]">Pitch Bend</div>
                  <div className="flex gap-[5px]"><SubBox label="Lower" val={38} /><SubBox label="Upper" val={55} /></div>
                </div>
              </div>
              {/* Filter */}
              <div className="w-[272px] ml-[3px] -mt-px shrink-0">
                <div className="flex pl-[8px]"><Chev active w="w-[86px]" pl="pl-[13px]">Filter</Chev><Chev w="w-[92px]" pl="pl-[7px]">Amplitude</Chev></div>
                <div className="h-[175px] bg-[#1c1c1c] border border-[#333] rounded-[3px] px-[5px] pt-[5px]">
                  <div className="flex h-[23px] text-[13.5px] font-medium">
                    <div className="w-[64px] bg-[#5a5a5a] rounded-t-[2px] flex items-center justify-center text-white">EG</div>
                    <div className="w-[64px] ml-[2px] bg-[#333] rounded-t-[2px] flex items-center justify-center text-[#aaa]">LFO</div>
                    <div className="ml-auto"><Expand /></div>
                  </div>
                  <div className="h-[140px] border border-[#666] bg-black px-[4px] pt-[5px]">
                    <svg width="250" height="65" className="block">
                      <defs><linearGradient id="eg" x1="0" y1="0" x2="0" y2="1"><stop offset="0" stopColor="#2a6cb0" /><stop offset="1" stopColor="#08121f" /></linearGradient></defs>
                      <rect x=".5" y="1.5" width="248" height="63" fill="none" stroke="#555" />
                      <line x1="0" y1="33" x2="248" y2="33" stroke="#555" />
                      <path d="M1 64L32 1.5L63 32H125L156 64Z" fill="url(#eg)" stroke="#3c7fc8" strokeWidth="1.5" />
                      {[[32, 4.5], [63, 32], [156, 61]].map(([x, y]) => <circle key={x} cx={x} cy={y} r="4" fill="#123a70" stroke="#3c7fc8" />)}
                    </svg>
                    <div className="flex text-[12.5px] text-[#aaa] mt-[2px]">
                      {[["Cutoff", "w-[78px]"], ["Resonance", "w-[84px]"], ["FEG Depth", "w-[86px]"]].map(([t, w]) => (
                        <div key={t} className={`${w} flex flex-col items-center leading-[14px]`}>{t}<span className="mt-[2px]"><Knob s={48} r={19} w={2.5} val={0} track="#4c4c4c" /></span></div>
                      ))}
                    </div>
                  </div>
                </div>
              </div>
              <svg width="20" height="100" className="mt-[60px] shrink-0"><defs><linearGradient id="ga" x1="0" y1="0" x2="1" y2="0"><stop offset="0" stopColor="#12300a" /><stop offset="1" stopColor="#8fd23a" /></linearGradient></defs><path d="M1 0L16 48L1 96Z" fill="url(#ga)" /></svg>
              {/* EQ */}
              <div className="w-[415px] -mt-px shrink-0">
                <div className="flex pl-[3px]">
                  <Chev active w="w-[91px]" pl="pl-[14px]">3-band</Chev><Chev w="w-[92px]" pl="pl-[10px]">Insertion</Chev><div className="ml-[2px]"><Chev w="w-[92px]" pl="pl-[17px]">2-band</Chev></div>
                </div>
                <div className="h-[175px] bg-[#1c1c1c] border border-[#333] rounded-[3px] px-[6px] pt-[5px]">
                  <div className="flex justify-end pr-[6px] h-[18px]"><Expand /></div>
                  <EqGraph />
                  <div className="flex items-center justify-end gap-[2px] mt-[6px] pr-[6px] text-[10px] font-medium text-white">
                    <span className="w-[10px] h-[10px] rounded-full bg-[#1b7fb5] text-[7px] flex items-center justify-center">1</span><span>LOW</span>
                    <span className="ml-[2px] w-[10px] h-[10px] rounded-full bg-[#c98322] text-[7px] flex items-center justify-center">2</span><span>MID</span>
                    <span className="ml-[2px] w-[10px] h-[10px] rounded-full bg-[#a3203f] text-[7px] flex items-center justify-center">3</span><span>HIGH</span>
                  </div>
                </div>
              </div>
            </div>
            <div className="absolute right-0 top-[2px] w-[24px] h-[39px] bg-[#3a3a3a] rounded-l-[6px] flex items-center justify-center"><ChevronsLeft size={15} color="#ccc" strokeWidth={1.5} /></div>
          </div>
        </div>
      </div>

      {/* Bottom */}
      <div className="h-[325px] w-[1366px] bg-[#1c1c1c] flex shrink-0 border-b border-[#333]">
        <div className="w-[124px] bg-[#3b3b3b] pl-[10px] pt-[7px] shrink-0 text-white font-medium">
          <div className="w-[104px] h-[74px] bg-[#2a2a2a] rounded-[3px] flex flex-col items-center pt-[12px]">
            <div className="w-[38px] h-[38px] border border-white flex items-center justify-center"><Plus size={30} strokeWidth={2} color="#fff" /></div>
            <span className="text-[12px] mt-[3px]">New</span>
          </div>
          <div className="w-[104px] h-[74px] mt-[5px] bg-[#2a2a2a] rounded-[3px] relative flex items-center justify-center text-center text-[12.5px] leading-[17px] pt-[2px]">
            <ArrowRight size={12} className="absolute right-[3px] top-[3px]" />Edit Common<br />Control Assign
          </div>
          <div className="w-[104px] h-[74px] mt-[5px] bg-[#3b3b3b] border border-[#666] rounded-[1px] text-[12.5px] relative">
            <div className="pl-[4px] pt-[2px] leading-[15px]">Display Filter</div>
            <span className="absolute right-[4px] top-[3px]"><Caret c="#aaa" /></span>
            <div className="text-center mt-[13px] text-[13px]">ModWheel</div>
          </div>
        </div>
        <div className="ml-[10px] mt-[10px] w-[234px] h-[304px] border border-white rounded-[5px] px-[4px] pt-[4px] relative shrink-0 font-medium">
          <div className="flex justify-end h-[16px] mb-[3px]"><span className="w-[40px] h-[16px] rounded-[3px] bg-[linear-gradient(90deg,#991f36,#6b1e5c)] text-[10px] text-white flex items-center justify-center">Delete</span></div>
          <div className="h-[39px] border border-[#444] relative text-center">
            <div className="text-[12px] text-[#999] text-left pl-[4px] leading-[15px] pt-[1px]">Source</div>
            <span className="absolute right-[4px] top-[2px]"><Caret c="#aaa" /></span>
            <div className="text-[14px] text-white leading-[19px]">ModWheel</div>
          </div>
          <div className="h-[39px] mt-[6px] border border-[#444] relative text-center">
            <div className="text-[12.5px] text-[#999] text-left pl-[4px] leading-[15px] pt-[1px]">Destination 1</div>
            <span className="absolute right-[4px] top-[2px]"><Caret c="#aaa" /></span>
            <div className="text-[14px] text-white leading-[19px]">E.LFO PMD</div>
          </div>
          <div className="flex mt-[6px]">
            <div className="w-[103px] h-[73px] border border-[#444] relative">
              <div className="h-[37px] border-b border-[#444] text-[12.5px] text-[#999] pl-[4px] pt-[12px] leading-[14px]">Curve Type</div>
              <span className="absolute right-[4px] top-[2px]"><Caret c="#aaa" /></span>
              <div className="text-[14px] text-white text-center leading-[35px]">Standard</div>
            </div>
            <svg width="104" height="73" className="ml-[6px] border border-[#555] bg-black block">
              <path d="M1 36L102 1V36Z" fill="#0b2a22" />
              <path d="M1 36L102 14V36Z" fill="#0e6a4e" />
              <line x1="51" y1="0" x2="51" y2="73" stroke="#444" strokeDasharray="2 2" />
              <line x1="0" y1="36" x2="104" y2="36" stroke="#666" strokeDasharray="2 2" />
            </svg>
            <div className="ml-[5px] w-[5px] h-[73px] bg-[#25c46a] rounded relative">
              <span className="absolute -left-[3px] top-[20px] w-[11px] h-[11px] rounded-full bg-white" />
            </div>
          </div>
          <div className="flex text-[12.5px] text-[#999] mt-[9px] leading-[15px] pl-[5px]"><span className="w-[103px]">Polarity</span><span>Param 1</span></div>
          <div className="w-[161px] h-px bg-[#444] mt-[8px]" />
          <div className="flex items-center">
            <div className="flex w-[100px] h-[35px] text-[11px] rounded-[3px] overflow-hidden">
              <span className="flex-1 bg-[linear-gradient(90deg,#0e6f5e,#0e6373)] text-white flex items-center justify-center">Uni</span>
              <span className="flex-1 bg-[#3a3a3a] text-[#aaa] flex items-center justify-center">Bi</span>
            </div>
            <div className="ml-[15px]"><Knob s={28} r={11} w={2.4} val={0} color="#17a8c4" track="#444" /></div>
          </div>
          <div className="ml-[109px] mt-[5px] w-[104px] h-[39px] bg-[#2c2c2c] rounded-[3px] flex items-center justify-center text-[12px] text-white">Element</div>
          <div className="absolute left-[239px] top-[140px] w-[39px] h-[24px] bg-[#222] border border-[#555] rounded-[2px] text-[12px] text-white flex items-center justify-center">+38</div>
          <svg width="6" height="10" className="absolute left-[234px] top-[147px]"><path d="M6 0L0 5L6 10Z" fill="#555" /></svg>
        </div>
      </div>
    </div>
  );
}

function SideItem({ active, label, icon, two }: { active?: boolean; label: string; icon: React.ReactNode; two?: boolean }) {
  return (
    <div className={`h-[165px] flex flex-col items-center justify-center border-b border-[#111] ${active ? "bg-[linear-gradient(90deg,#3a3a3a,#222_80%,#181818)] border-l-2 border-l-[#888]" : "bg-[#1a1a1a]"} ${two ? "pt-[8px]" : "pt-[5px]"}`}>
      {icon}
      <span className={`text-[11.5px] leading-[16px] text-center mt-[5px] font-medium whitespace-pre-line ${active ? "text-white" : "text-[#999]"}`}>{label}</span>
    </div>
  );
}

function Plugin() {
  return (
    <div className="absolute left-[235px] top-[45px] w-[1450px] h-[930px] bg-[#5db7dc] flex flex-col px-[5px] pb-[5px] font-['Roboto',sans-serif] z-10">
      <div className="h-[27px] relative flex items-center justify-center text-[10.7px] text-[#16324a] shrink-0 font-['Liberation_Sans',sans-serif]">
        01 - Expanded Softsynth Plugin for MONTAGE M
        <div className="absolute right-[2px] top-[3px] w-[18px] h-[18px] bg-[#c04b4f] flex items-center justify-center text-white"><X size={9} strokeWidth={3} /></div>
      </div>
      <div className="h-[28px] pt-[1px] bg-[#263b52] flex items-center text-[#d7dee4] shrink-0 font-['Liberation_Sans',sans-serif]">
        <div className="ml-[4px] w-[50px] h-[18px] flex rounded-[2px] overflow-hidden bg-[#465a6c]">
          <span className="flex-1 bg-[#cfd5d9] flex items-center justify-center"><Power size={12} color="#111" strokeWidth={3} /></span>
          <span className="flex-1 flex items-center justify-center"><span className="w-[9px] h-[9px] border-t-2 border-x border-b border-[#d7dee4]" /></span>
        </div>
        <div className="ml-[4px] w-[50px] h-[18px] flex rounded-[2px] bg-[#465a6c] text-[12px] font-bold divide-x divide-[#263b52]"><span className="flex-1 text-center leading-[18px]">R</span><span className="flex-1 text-center leading-[18px]">W</span></div>
        <div className="ml-[4px] w-[50px] h-[18px] flex rounded-[2px] bg-[#465a6c] items-center divide-x divide-[#263b52]">
          <span className="flex-1 flex justify-center"><span className="w-[11px] h-[11px] rounded-full bg-[#d7dee4] text-[#263b52] text-[9px] leading-[10px] text-center font-bold">a</span></span>
          <span className="flex-1 flex justify-center"><svg width="9" height="9"><path d="M9 0V9L0 4.5Z" fill="#d7dee4" /></svg></span>
        </div>
        <div className="ml-[3px] w-[43px] h-[18px] flex rounded-[2px] bg-[#465a6c] items-center">
          <span className="w-[29px] flex justify-center"><svg width="13" height="13"><path d="M5 0H8V4H13V8H9L6.5 13L4 8H0V4H5Z" fill="#d7dee4" /></svg></span>
          <span className="flex-1 h-full bg-[#1a2c3d] flex items-center justify-center"><Caret /></span>
        </div>
        <span className="ml-[7px] w-[9px] h-[9px] rounded-full bg-[#3f5468] border border-[#1a2c3d]" />
        <div className="ml-[7px] w-[152px] h-[18px] flex items-center rounded-[2px] border border-[#5b6f80] bg-[#1a2c3d] text-[12px]">
          <span className="w-[96px] pl-[3px]">Default</span>
          <span className="w-[37px] h-full bg-[#3e5266] flex items-center justify-around px-[2px]"><svg width="11" height="10"><path d="M0 7L5.5 0L11 7Z M0 8H11V10H0Z" fill="#d7dee4" /></svg><svg width="11" height="10"><path d="M0 3L5.5 10L11 3Z M0 0H11V2H0Z" fill="#d7dee4" /></svg></span>
          <span className="flex-1 flex justify-center"><Caret /></span>
        </div>
        <div className="ml-auto flex items-center mr-[5px]">
          <div className="w-[24px] h-[18px] rounded-[2px] bg-[#4e6274] flex items-center justify-center"><Camera size={13} fill="#fff" color="#4e6274" /></div>
          <div className="ml-[5px] w-[24px] h-[18px] rounded-[2px] border border-[#5b6f80] bg-[#1a2c3d] flex items-center justify-end pr-[4px]"><Caret /></div>
          <div className="ml-[5px] w-[24px] h-[18px] rounded-[2px] bg-[#465a6c] flex items-center justify-center"><Activity size={12} /></div>
          <div className="ml-[5px] w-[60px] h-[18px] rounded-[2px] bg-[#465a6c] flex items-center text-[12px] font-bold pl-[3px]">QC<LockOpen size={11} className="ml-[4px]" strokeWidth={3} fill="#d7dee4" /><span className="ml-auto mr-[1px] w-[15px] h-[14px] bg-[#3b4f62]" /></div>
        </div>
      </div>
      <div className="flex-1 bg-black relative overflow-hidden flex flex-col">
        <GridBg />
        <div className="h-[41px] bg-[#121212] relative flex items-center shrink-0 text-[#aaa]">
          <div className="ml-[69px] w-[441px] h-[30px] rounded-[3px] bg-[#2a2a2a] flex items-center pl-[11px] text-[22px] font-medium text-white">
            <Star size={19} fill="#666" color="#666" /><span className="ml-[10px]">Init Normal (AWM2)</span>
            <span className="ml-auto mr-[10px] flex flex-col gap-[6px]"><svg width="12" height="6"><path d="M0 6H12L6 0Z" fill="#aaa" /></svg><svg width="12" height="6"><path d="M0 0H12L6 6Z" fill="#aaa" /></svg></span>
          </div>
          <Search size={22} className="ml-[30px] -scale-x-100" strokeWidth={1.5} />
          <svg width="26" height="22" viewBox="0 0 26 22" fill="none" stroke="#aaa" strokeWidth="1.5" className="ml-[37px]"><rect x="3" y="2" width="20" height="15" /><path d="M1 18H20M19 10V20M16 17L19 21L22 17" /></svg>
          <span className="ml-[32px] w-px h-[24px] bg-[#444]" />
          <span className="ml-[27px] relative"><Folder size={26} strokeWidth={1.2} /><svg width="9" height="6" className="absolute -right-[9px] top-0"><path d="M0 0H9L4.5 6Z" fill="#aaa" /></svg></span>
          <span className="ml-[25px] w-px h-[24px] bg-[#444]" />
          <RefreshCw size={26} className="ml-[27px] text-[#ddd]" strokeWidth={2} />
          <svg width="24" height="20" className="ml-[33px]" fill="#aaa">
            {[0, 5, 10, 15, 20].map((x) => [0, 5, 10, 15].map((y) => <rect key={x + "-" + y} x={x} y={y} width="4" height="4" />))}
          </svg>
          <svg width="26" height="26" viewBox="0 0 26 26" className="ml-[30px]" fill="#aaa"><ellipse cx="6" cy="21" rx="5" ry="3.5" /><path d="M9.5 21V2H11C11 7 18 8 17 13C15 10 13 9 11 9V21Z" /><rect x="15" y="14" width="10" height="10" fill="none" stroke="#aaa" /><path d="M20 15V23M16 19H24" stroke="#aaa" /></svg>
          <span className="ml-[24px] w-px h-[24px] bg-[#444]" />
          <Settings size={21} className="ml-[25px]" strokeWidth={1.3} />
          <div className="ml-[26px] w-[79px] h-[30px] rounded-[3px] bg-[linear-gradient(115deg,#222_55%,#333_55%,#333_70%,#222_70%)] flex items-center pl-[6px]">
            <span className="text-[10.5px] text-[#999]">DAW</span><Music2 size={14} color="#fff" fill="#fff" className="ml-[3px]" /><span className="ml-[3px] text-[14px] font-medium text-white">120</span>
          </div>
          <div className="ml-[25px] w-[54px] h-[30px] bg-[#16202c] flex items-center"><span className="w-full h-[1px] bg-[#667] mx-[3px]" /></div>
          <div className="ml-[50px] w-[66px] flex items-center text-white"><span className="w-[13px] h-[13px] rounded-full border border-white mr-[1px] flex items-center justify-center shrink-0"><Asterisk size={10} /></span><span className="text-[14px] font-bold leading-none tracking-tighter">YAMAHA</span></div>
          <div className="ml-[9px] text-[14px] font-light tracking-[1px] text-[#cfcfcf] whitespace-nowrap leading-none origin-left scale-x-[1.75]">MONTAGE<span className="text-[#c2504f] font-bold">M</span></div>
        </div>
        <div className="flex-1 flex relative min-h-0">
          <div className="w-[63px] shrink-0 flex flex-col">
            <SideItem active label="Home" icon={<svg width="18" height="17" fill="#fff"><path d="M9 0L18 8V17H11V11H7V17H0V8Z" /></svg>} />
            <SideItem label="SuperKnob" icon={<svg width="40" height="38" fill="none" stroke="#888"><circle cx="20" cy="19" r="18" strokeWidth="3" strokeDasharray="1 1" /><circle cx="20" cy="19" r="12" strokeWidth="1.2" /><circle cx="20" cy="19" r="8" strokeWidth="1.2" /><circle cx="20" cy="19" r="5" strokeWidth="1" /></svg>} />
            <SideItem label="KnobAuto" icon={<svg width="38" height="22" stroke="#888" strokeWidth="2"><path d="M3 20L7 18M7 13L10 15M13 8L15 12M19 5V10M25 8L23 12M31 13L28 15" /><path d="M35 20L31 18" stroke="#333" /></svg>} />
            <SideItem label="Scene" icon={<svg width="42" height="34" viewBox="0 0 42 34" fill="none" stroke="#888" strokeWidth="2"><path d="M5 24A13 13 0 0 1 16 5" /><path d="M24 5A13 13 0 0 1 37 24" /><path d="M13 30A11 11 0 0 1 21 10A11 11 0 0 1 29 30" /><line x1="15" y1="2" x2="15" y2="7" stroke="#aaa" /><line x1="21" y1="7" x2="21" y2="15" stroke="#ccc" /></svg>} />
            <SideItem two label={"Smart\nMorph"} icon={<div className="w-[30px] h-[30px] bg-[radial-gradient(ellipse,#d8d8d8,#6a6a6a_80%)]" />} />
          </div>
          <Main />
        </div>
      </div>
    </div>
  );
}

export default function App() {
  const menu = ["File", "Edit", "Project", "Audio", "MIDI", "Score", "Media", "Transport", "Studio", "Workspaces", "Window", "Hub", "Help"];
  return (
    <div className="w-[1920px] h-[1025px] bg-[#5db7dc] flex flex-col overflow-hidden relative font-['Liberation_Sans',sans-serif]">
      <div className="h-[24px] flex items-center relative shrink-0">
        <svg width="14" height="14" className="ml-[8px]"><path d="M8 0L0 7L8 14V9.5L5 7L8 4.5Z" fill="#b5161c" /><circle cx="10" cy="7" r="2.5" fill="#b5161c" /></svg>
        <span className="absolute left-0 right-0 text-center text-[11px] text-[#16324a]">Cubase Project - Untitled1</span>
        <div className="ml-auto flex items-center h-full">
          <Minus size={12} strokeWidth={3} color="#111" className="mr-[18px]" />
          <span className="w-[11px] h-[9px] border border-t-2 border-[#111] mr-[13px]" />
          <span className="w-[45px] h-[18px] bg-[#c04b4f] flex items-center justify-center mr-[4px] mb-[6px]"><X size={11} color="#fff" strokeWidth={3} /></span>
        </div>
      </div>
      <div className="flex-1 mx-[5px] mb-[5px] bg-[#263b52] flex flex-col min-h-0">
        <div className="h-[21px] flex items-center gap-[18px] pl-[11px] text-[12px] text-[#dfe5ea] shrink-0">
          {menu.map((m) => <span key={m}>{m}</span>)}
        </div>
        <div className="h-[40px] flex items-center shrink-0">
          <div className="ml-[9px] w-[50px] h-[25px] rounded-[3px] bg-[#465a6c] border border-[#5b6f80] flex items-center justify-around text-[#dfe5ea]"><Undo2 size={15} strokeWidth={2.5} /><Redo2 size={15} strokeWidth={2.5} /></div>
          <div className="ml-auto mr-[4px] flex items-center">
            <div className="w-[25px] h-[25px] rounded-[3px] border border-[#5b6f80] bg-[#465a6c] flex items-center justify-center"><span className="w-[15px] h-[14px] bg-[#dfe5ea] rounded-[1px] flex items-end justify-center pb-[2px]"><Keys c="#465a6c" w={11} /></span></div>
            <div className="ml-[5px] w-[119px] h-[25px] rounded-[3px] border border-[#5b6f80] flex overflow-hidden">
              <span className="w-[25px] bg-[#465a6c] flex items-center justify-center"><span className="w-[9px] h-[13px] border-2 border-[#dfe5ea]" /></span>
              <span className="w-[25px] bg-[#d5dade] flex items-center justify-center"><span className="w-[15px] h-[13px] border-2 border-[#333] border-l-[5px]" /></span>
              <span className="w-[25px] bg-[#465a6c] flex items-center justify-center"><span className="w-[15px] h-[13px] border-b-[4px] border-x border-t border-[#dfe5ea]" /></span>
              <span className="w-[25px] bg-[#d5dade] flex items-center justify-center"><span className="w-[15px] h-[13px] border-2 border-[#333] border-r-[5px]" /></span>
              <span className="flex-1 bg-[#1a2c3d] flex items-center justify-center"><Settings size={11} color="#dfe5ea" strokeWidth={3} /></span>
            </div>
          </div>
        </div>
        <div className="flex-1 bg-[#0a1218] flex pt-[4px] min-h-0">
          <Inspector />
          <TrackList />
          <Rack />
        </div>
        <Transport />
      </div>
      <Plugin />
    </div>
  );
}
